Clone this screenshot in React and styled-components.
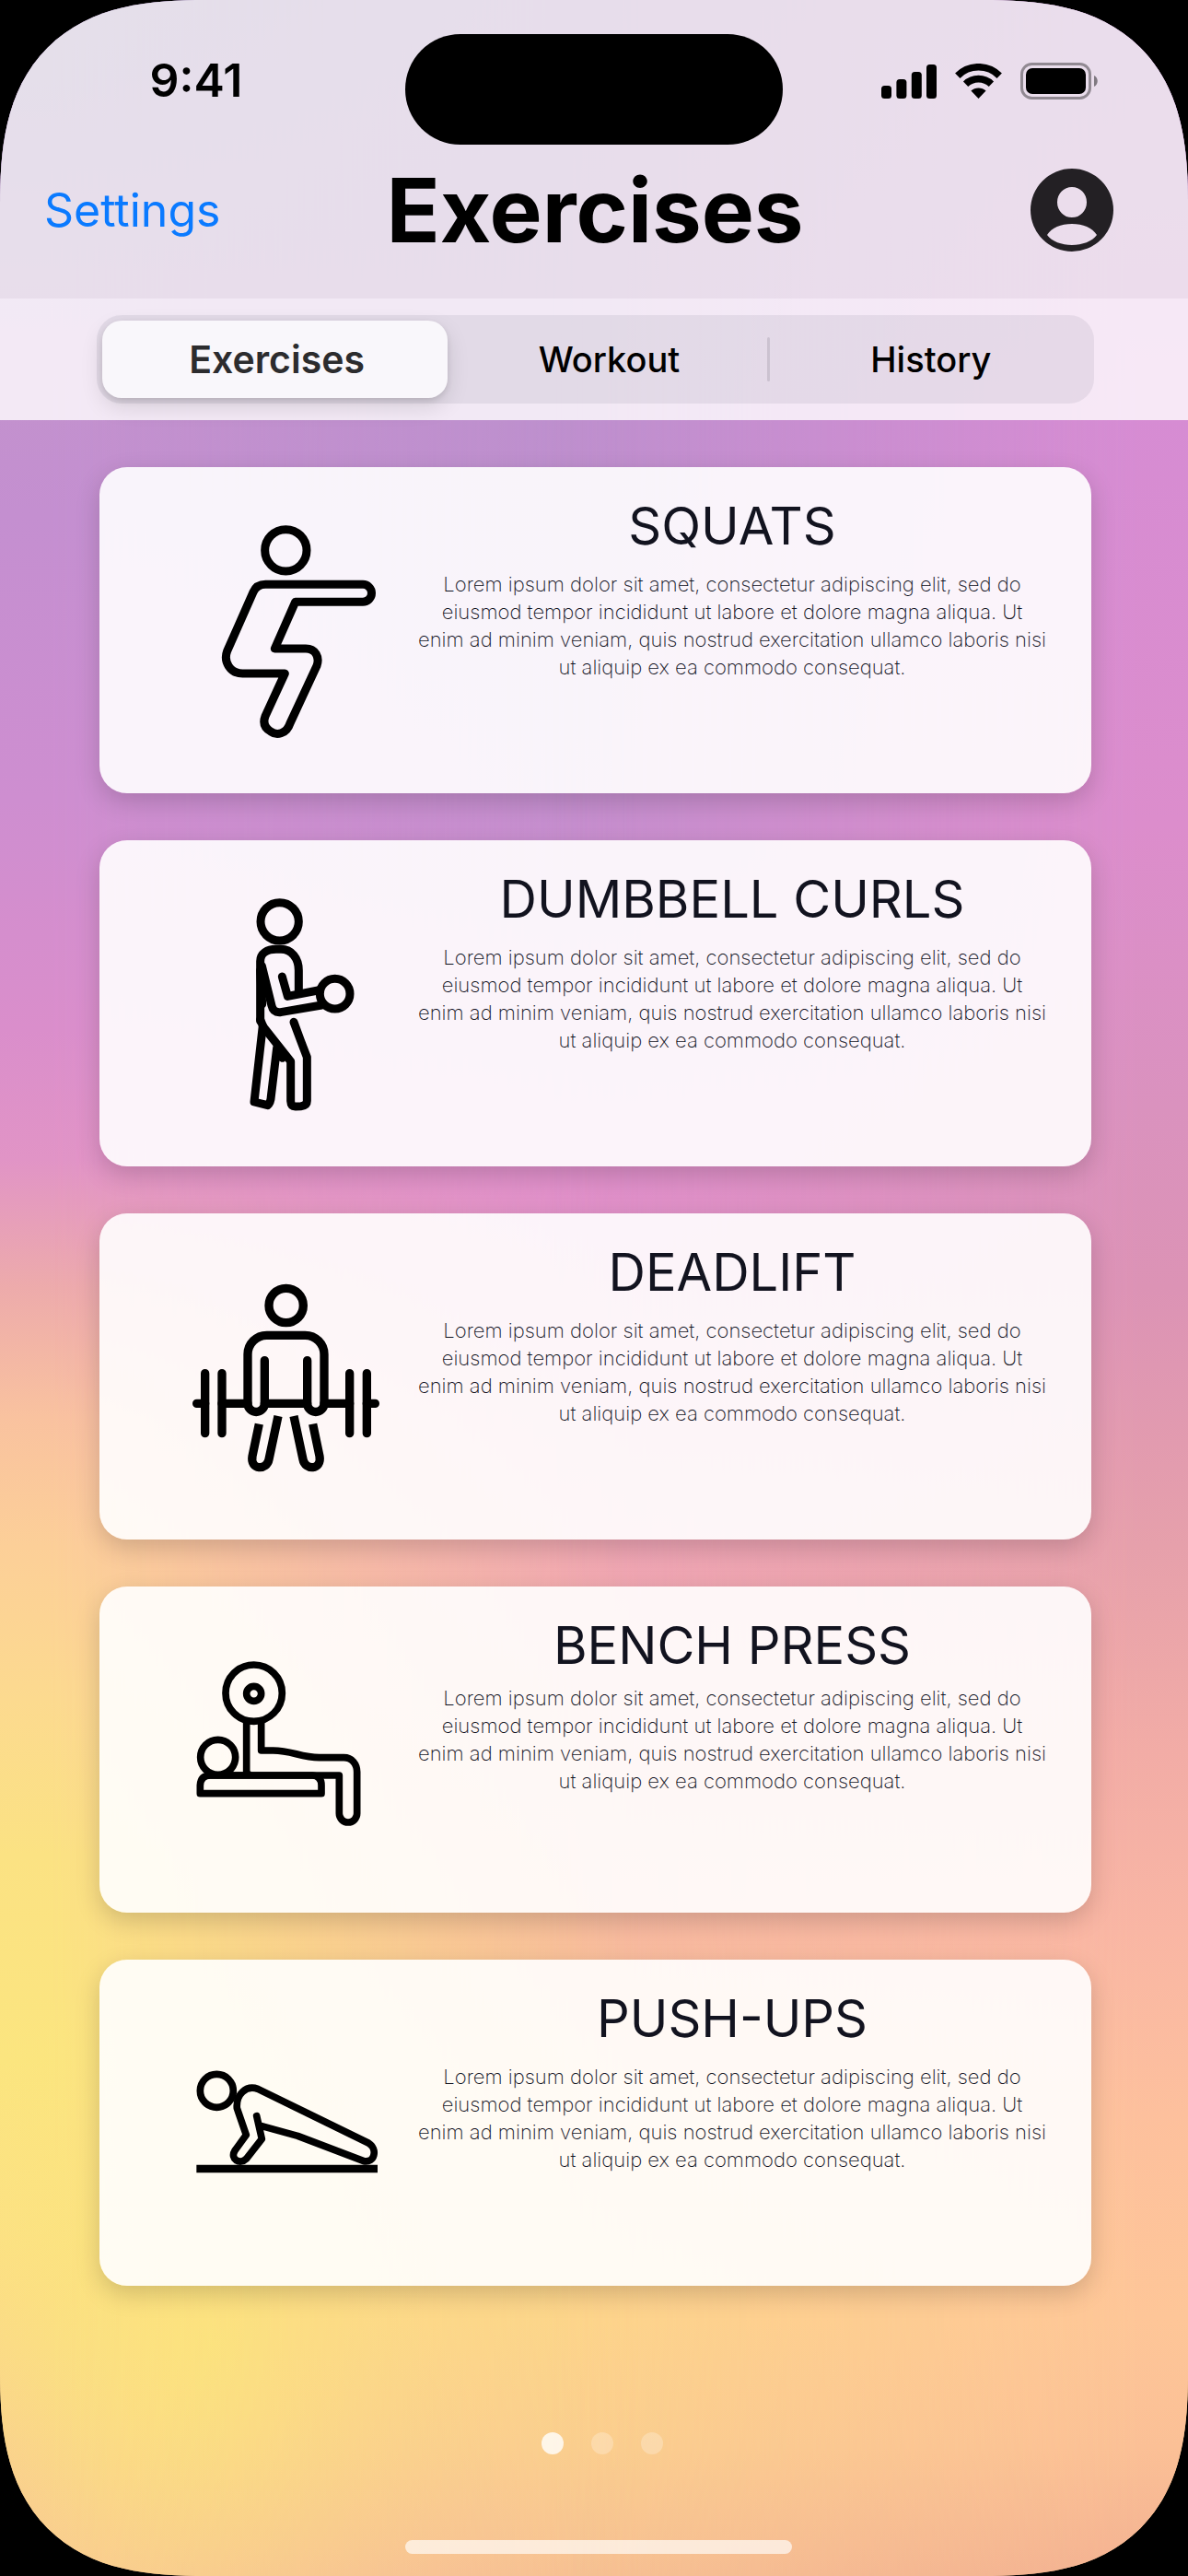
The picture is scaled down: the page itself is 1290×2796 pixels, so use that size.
import React, { useState } from "react";
import styled, { createGlobalStyle } from "styled-components";

const GlobalStyle = createGlobalStyle`
  *, *::before, *::after { box-sizing: border-box; }
  body {
    margin: 0;
    background: #000;
    font-family: Inter, "Liberation Sans", sans-serif;
    color: #000;
  }
  button {
    padding: 0;
    border: 0;
    background: none;
    font: inherit;
    color: inherit;
    cursor: pointer;
  }
`;

/* The wallpaper is three vertical gradients: the middle one fills the screen,
   the side ones fade in towards the left and right edges. */
const Screen = styled.div`
  position: relative;
  isolation: isolate;
  overflow: hidden;
  display: flex;
  flex-direction: column;
  min-height: 100vh;
  border-radius: 176px;
  background: linear-gradient(
    #bb92cc 0%, #bd90ce 16%, #c38fcf 31%, #e08fcc 46%, #e596c4 52%,
    #f0a5b6 60%, #f4aea8 68%, #f8ba9f 75%, #fbcb93 83%, #fdd68b 90%,
    #fbd08e 95%, #f7c293 100%
  );

  @supports (corner-shape: superellipse(1.4)) {
    border-radius: 224px;
    corner-shape: superellipse(1.4);
  }

  &::before,
  &::after {
    content: "";
    position: absolute;
    inset: 0;
    z-index: -1;
  }

  &::before {
    background:
      radial-gradient(ellipse 340px 420px at 18% 91%, #fbe77a 0%, #fbe77a00 100%),
      linear-gradient(
        #aa9bc8 0%, #c292cd 14%, #c48fd0 20%, #ce8ed0 31%, #da8ecb 40%,
        #e194c6 45%, #edabab 50%, #f9c29f 55%, #fccf98 60%, #fcda8f 66%,
        #fbe283 72%, #fbe57f 80%, #fcdf86 87%, #fbd68b 91%, #f9c994 96%,
        #f8c298 100%
      );
    mask-image: linear-gradient(to right, #000 0%, #000 4%, transparent 54%);
  }

  &::after {
    background: linear-gradient(
      #c692cf 0%, #d68cd3 16%, #dc8dcc 32%, #da92be 43%, #dc93b5 50%,
      #e6a0ab 60%, #f2aca6 68%, #f9b6a4 75%, #fdc09d 82%, #fec698 90%,
      #fbc096 95%, #f3b192 100%
    );
    mask-image: linear-gradient(to left, #000 0%, #000 4%, transparent 54%);
  }
`;

const Header = styled.header`
  padding: 37px 0 25px;
  background: rgba(243, 240, 243, 0.8);
`;

const StatusBar = styled.div`
  display: grid;
  grid-template-columns: 1fr 410px 1fr;
  height: 120px;
`;

const Island = styled.div`
  border-radius: 60px;
  background: #000;
`;

const Clock = styled.time`
  padding-right: 14px;
  font-size: 50px;
  font-weight: 600;
  line-height: 100px;
  text-align: center;
`;

const Indicators = styled.div`
  display: flex;
  align-items: center;
  justify-content: center;
  gap: 20px;
  height: 102px;
  padding-left: 8px;
`;

const NavBar = styled.div`
  display: grid;
  grid-template-columns: 1fr auto 1fr;
  align-items: center;
  height: 142px;
  padding: 0 46px 0 48px;
`;

const NavLink = styled.a`
  justify-self: start;
  font-size: 50px;
  line-height: 60px;
  color: #0a7aff;
  text-decoration: none;
`;

const PageTitle = styled.h1`
  margin: 0;
  font-size: 96px;
  font-weight: 700;
  line-height: 112px;
`;

const ProfileButton = styled.button`
  justify-self: end;
  width: 90px;
  height: 90px;
  margin-right: 35px;
  border-radius: 50%;

  svg { display: block; }
`;

const TabStrip = styled.nav`
  padding: 18px 102px 18px 105px;
  background: rgba(255, 255, 255, 0.8);
`;

const Segmented = styled.div`
  display: grid;
  grid-template-columns: 13fr 12fr 3px 12fr;
  align-items: center;
  height: 96px;
  padding: 6px;
  border-radius: 27px;
  background: rgba(118, 118, 128, 0.12);
`;

const Segment = styled.button`
  height: 84px;
  padding-left: 4px;
  border-radius: 21px;
  font-size: ${(p) => (p.$active ? 41 : 38)}px;
  font-weight: ${(p) => (p.$active ? 600 : 500)};
  line-height: 48px;
  color: ${(p) => (p.$active ? "#2c2c2e" : "#000")};
  background: ${(p) => (p.$active ? "#f9f7fb" : "transparent")};
  box-shadow: ${(p) =>
    p.$active
      ? "0 9px 24px rgba(0, 0, 0, 0.12), 0 3px 6px rgba(0, 0, 0, 0.1)"
      : "none"};
`;

const SegmentDivider = styled.span`
  height: 48px;
  border-radius: 2px;
  background: #cbc2d0;
`;

const CardList = styled.ul`
  display: flex;
  flex-direction: column;
  gap: 51px;
  margin: 0;
  padding: 51px 105px 0 108px;
  list-style: none;
`;

const Card = styled.li`
  display: grid;
  grid-template-columns: 216px 1fr;
  gap: 30px;
  padding: 32px 45px 32px 96px;
  border-radius: 30px;
  background: rgba(255, 255, 255, 0.9);
  box-shadow: 0 9px 27px rgba(0, 0, 0, 0.17);
`;

const Figure = styled.svg`
  display: block;
  width: 216px;
  height: 290px;
  fill: none;
  stroke: #000;
  stroke-linejoin: round;
`;

const CardText = styled.div`
  display: flex;
  flex-direction: column;
  gap: ${(p) => (p.$tight ? 10 : 16)}px;
  text-align: center;
  color: #12131f;
`;

const CardTitle = styled.h2`
  margin: 0;
  font-size: 56px;
  font-weight: 400;
  line-height: 64px;
`;

const CardBody = styled.p`
  margin: 0;
  font-size: 22px;
  font-weight: 200;
  line-height: 30px;
  white-space: pre-line;
`;

const Footer = styled.footer`
  display: flex;
  flex-direction: column;
  align-items: center;
  gap: 93px;
  padding: 159px 0 24px 9px;
`;

const Pager = styled.div`
  display: flex;
  gap: 30px;
  padding-left: 9px;
`;

const PageDot = styled.button`
  width: 24px;
  height: 24px;
  border-radius: 50%;
  background: rgba(255, 255, 255, ${(p) => (p.$active ? 0.8 : 0.25)});
`;

const HomeIndicator = styled.div`
  width: 420px;
  height: 15px;
  border-radius: 8px;
  background: rgba(255, 255, 255, 0.66);
`;

const SignalIcon = () => (
  <svg width="60" height="38" viewBox="0 0 60 38" aria-hidden="true">
    <rect x="0" y="24" width="11" height="14" rx="3.5" />
    <rect x="16.4" y="17" width="11" height="21" rx="3.5" />
    <rect x="32.8" y="9" width="11" height="29" rx="3.5" />
    <rect x="49" y="1" width="11" height="37" rx="3.5" />
  </svg>
);

const WifiIcon = () => (
  <svg width="51" height="38" viewBox="0 0 51 38" fill="none" aria-hidden="true">
    <path d="M2.8 13.2 A32 32 0 0 1 48.2 13.2" stroke="#000" strokeWidth="7.6" />
    <path d="M11.6 22.2 A20 20 0 0 1 39.4 22.2" stroke="#000" strokeWidth="7.6" />
    <path d="M25.5 38 L17.4 29.6 A12 12 0 0 1 33.6 29.6 Z" fill="#000" />
  </svg>
);

const BatteryIcon = () => (
  <svg width="84" height="40" viewBox="0 0 84 40" fill="none" aria-hidden="true">
    <rect x="1.5" y="1.5" width="74" height="37" rx="11" stroke="#000" strokeOpacity="0.38" strokeWidth="3" />
    <rect x="6" y="6" width="65" height="28" rx="7" fill="#000" />
    <path d="M80 14 C85 16 85 24 80 26 Z" fill="#000" fillOpacity="0.45" />
  </svg>
);

const ProfileIcon = () => (
  <svg width="90" height="90" viewBox="0 0 90 90" aria-hidden="true">
    <path
      fill="#232024"
      fillRule="evenodd"
      d="M45 0 A45 45 0 1 1 45 90 A45 45 0 1 1 45 0 Z
         M45 20 A16 16.5 0 1 0 45 53 A16 16.5 0 1 0 45 20 Z
         M18 72 C23 64 33 60 45 60 S67 64 72 72 C67 79 56 83 45 83 S23 79 18 72 Z"
    />
  </svg>
);

const SquatFigure = () => (
  <Figure viewBox="12 -3 648 870" strokeWidth="27" aria-hidden="true">
    <circle cx="331" cy="172" r="68" />
    <path d="M265 283 H582 a28.5 28.5 0 0 1 0 57 H362 L295 492 H396 C428 492 442 520 432 548 L345 735 C333 772 300 775 282 762 C262 750 256 733 264 712 L328 573 H190 C150 573 127 535 140 500 L225 308 C232 292 246 283 265 283 Z" />
  </Figure>
);

const CurlFigure = () => (
  <Figure viewBox="72 12 648 870" strokeWidth="27" strokeLinecap="round" aria-hidden="true">
    <circle cx="371" cy="181" r="62" />
    <path d="M308 505 V310 C308 285 330 271 360 271 H375 C410 271 433 300 433 340 V408" />
    <path d="M313 325 L345 455 Q350 478 374 476 L508 453" />
    <path d="M308 340 L314 450" />
    <path d="M379 360 L397 424 L496 405" />
    <circle cx="551" cy="416" r="49" />
    <path d="M308 500 L318 524 L407 636 V765 Q408 783 422 783 L440 782 Q460 780 460 765 V622 L440 570 L417 508" />
    <path d="M316 520 L288 768 L332 779 Q342 770 343 750 L362 592 L380 625" />
  </Figure>
);

const DeadliftFigure = () => (
  <Figure viewBox="72 -33 648 870" strokeWidth="28" strokeLinecap="round" aria-hidden="true">
    <circle cx="392" cy="171" r="56" />
    <path d="M322 350 V490 a27.5 27.5 0 0 1 -55 0 V330 a62 62 0 0 1 62 -62 H454 a62 62 0 0 1 62 62 V490 a27.5 27.5 0 0 1 -55 0 V350" />
    <path d="M101 490 H128 M183 490 H267 M322 490 H461 M516 490 H599 M655 490 H682" />
    <path d="M128 392 V587 M183 392 V587 M599 392 V587 M655 392 V587" />
    <path
      strokeLinecap="butt"
      d="M304 557 L282 662 C274 708 330 708 336 672 L366 531 M479 557 L501 662 C509 708 453 708 447 672 L417 531"
    />
  </Figure>
);

const BenchFigure = () => (
  <Figure viewBox="72 -48 648 870" strokeWidth="23" aria-hidden="true">
    <circle cx="287" cy="203" r="92" />
    <circle cx="287" cy="205" r="24" />
    <circle cx="170" cy="412" r="57" />
    <path d="M263 296 V462 L275 471 M311 296 V390 H350 C410 390 440 413 500 413 H580 C606 413 623 434 623 460 V595 a29 29 0 0 1 -58 0 V471 H130" />
    <path d="M112 530 V503 Q114 471 145 471 H478 Q507 473 507 503 V530 Z" />
  </Figure>
);

const PushUpFigure = () => (
  <Figure viewBox="72 -153 648 870" strokeWidth="23" aria-hidden="true">
    <circle cx="166" cy="178" r="54" />
    <path
      strokeLinecap="round"
      d="M296 260 L313 335 L262 400 C242 420 208 400 225 373 L262 322 L232 235 C228 190 262 158 300 172 L660 348 C692 368 680 414 645 407 L430 325 L310 292"
    />
    <path strokeWidth="25" d="M100 432 H690" />
  </Figure>
);

const LOREM = `Lorem ipsum dolor sit amet, consectetur adipiscing elit, sed do
eiusmod tempor incididunt ut labore et dolore magna aliqua. Ut
enim ad minim veniam, quis nostrud exercitation ullamco laboris nisi
ut aliquip ex ea commodo consequat.`;

const EXERCISES = [
  { title: "SQUATS", Icon: SquatFigure },
  { title: "DUMBBELL CURLS", Icon: CurlFigure },
  { title: "DEADLIFT", Icon: DeadliftFigure },
  { title: "BENCH PRESS", Icon: BenchFigure, tight: true },
  { title: "PUSH-UPS", Icon: PushUpFigure },
];

export default function App() {
  const [tab, setTab] = useState("Exercises");
  const [page, setPage] = useState(0);

  const segment = (name) => (
    <Segment type="button" $active={tab === name} aria-pressed={tab === name} onClick={() => setTab(name)}>
      {name}
    </Segment>
  );

  return (
    <>
      <GlobalStyle />
      <Screen>
        <Header>
          <StatusBar>
            <Clock>9:41</Clock>
            <Island />
            <Indicators>
              <SignalIcon />
              <WifiIcon />
              <BatteryIcon />
            </Indicators>
          </StatusBar>
          <NavBar>
            <NavLink href="#settings">Settings</NavLink>
            <PageTitle>Exercises</PageTitle>
            <ProfileButton type="button" aria-label="Profile">
              <ProfileIcon />
            </ProfileButton>
          </NavBar>
        </Header>
        <TabStrip>
          <Segmented>
            {segment("Exercises")}
            {segment("Workout")}
            <SegmentDivider />
            {segment("History")}
          </Segmented>
        </TabStrip>
        <CardList>
          {EXERCISES.map(({ title, Icon, tight }) => (
            <Card key={title}>
              <Icon />
              <CardText $tight={tight}>
                <CardTitle>{title}</CardTitle>
                <CardBody>{LOREM}</CardBody>
              </CardText>
            </Card>
          ))}
        </CardList>
        <Footer>
          <Pager>
            {[0, 1, 2].map((i) => (
              <PageDot key={i} type="button" aria-label={`Page ${i + 1}`} $active={page === i} onClick={() => setPage(i)} />
            ))}
          </Pager>
          <HomeIndicator />
        </Footer>
      </Screen>
    </>
  );
}
